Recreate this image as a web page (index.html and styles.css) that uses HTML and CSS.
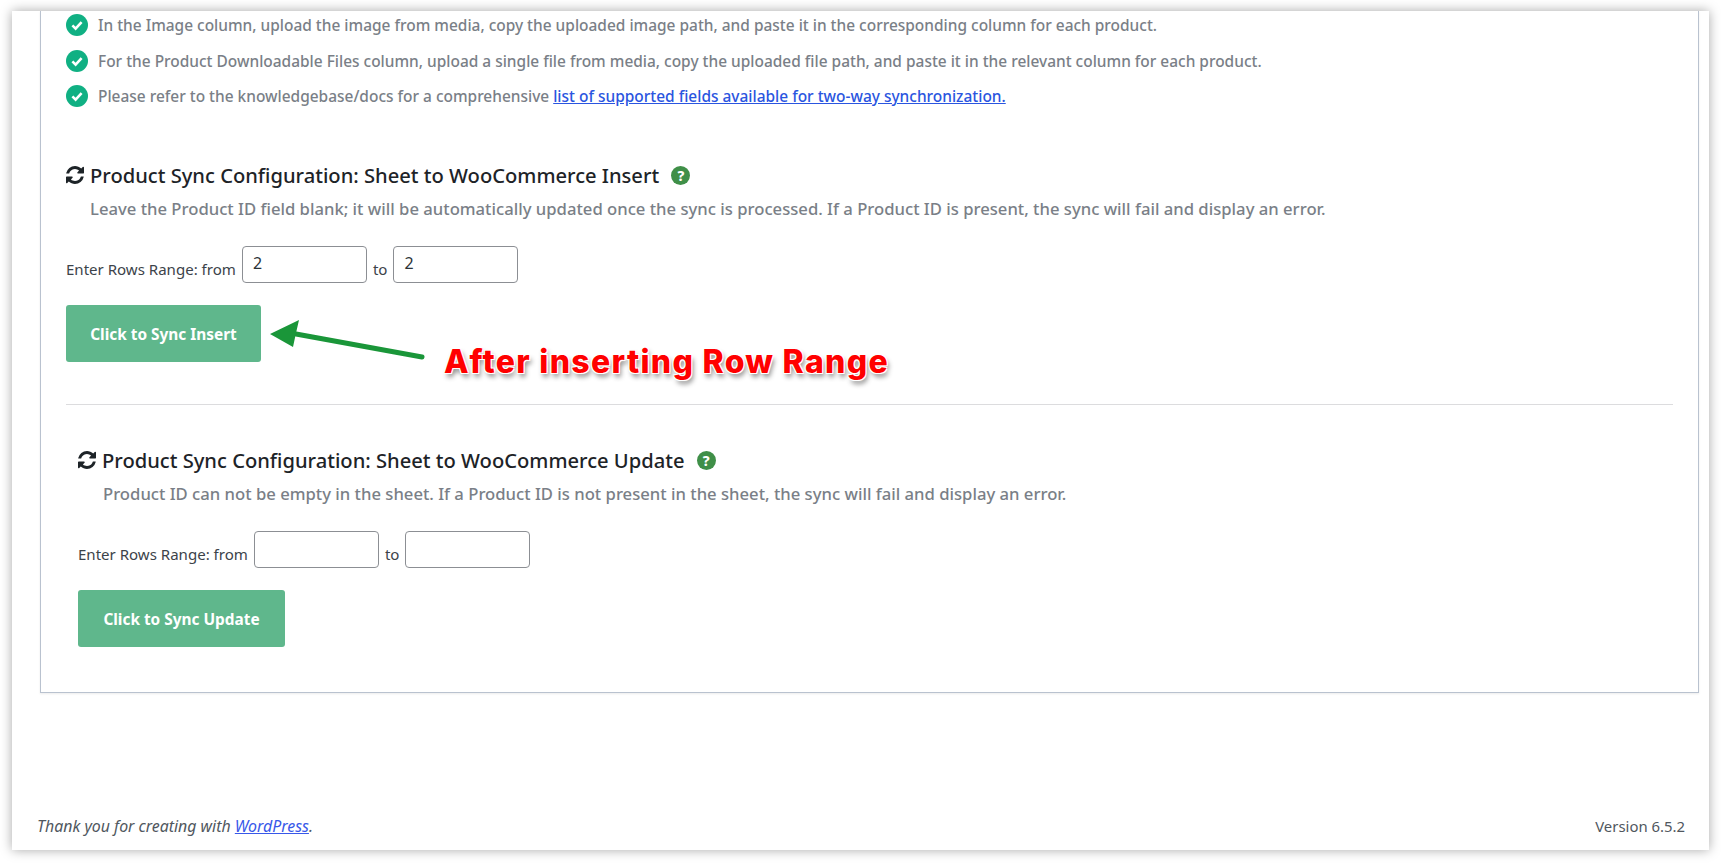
FILE: index.html
```html
<!DOCTYPE html>
<html lang="en">
<head>
    <meta charset="UTF-8">
    <title>Product Sync Configuration</title>
    <link rel="stylesheet" href="styles.css">
</head>
<body>

<svg class="defs" width="0" height="0">
    <symbol id="sync" viewBox="128 128 1536 1536">
        <path d="M1639 1056q0 5-1 7-64 268-268 434.5t-478 166.5q-146 0-282.5-55t-243.5-157l-129 129q-19 19-45 19t-45-19-19-45v-448q0-26 19-45t45-19h448q26 0 45 19t19 45-19 45l-137 137q71 66 161 102t187 36q134 0 250-65t186-179q11-17 53-117 8-23 30-23h192q13 0 22.5 9.5t9.5 22.5zm25-800v448q0 26-19 45t-45 19h-448q-26 0-45-19t-19-45 19-45l138-138q-148-137-349-137-134 0-250 65t-186 179q-11 17-53 117-8 23-30 23h-199q-13 0-22.5-9.5t-9.5-22.5v-7q65-268 270-434.5t480-166.5q146 0 284 55.5t245 156.5l130-129q19-19 45-19t45 19 19 45z"/>
    </symbol>
    <symbol id="check" viewBox="0 0 22 22">
        <circle cx="11" cy="11" r="11" fill="#10b083"/>
        <path d="M6.4 11.4l3.2 3.2 6-6.4" fill="none" stroke="#fff" stroke-width="2.6"/>
    </symbol>
</svg>

<div class="window">
    <div class="card">
        <ul class="steps">
            <li><svg class="check"><use href="#check"/></svg>In the Image column, upload the image from media, copy the uploaded image path, and paste it in the corresponding column for each product.</li>
            <li><svg class="check"><use href="#check"/></svg>For the Product Downloadable Files column, upload a single file from media, copy the uploaded file path, and paste it in the relevant column for each product.</li>
            <li><svg class="check"><use href="#check"/></svg><span>Please refer to the knowledgebase/docs for a comprehensive <a href="#">list of supported fields available for two-way synchronization.</a></span></li>
        </ul>

        <div class="sync first">
            <h2><svg class="sync-icon"><use href="#sync"/></svg>Product Sync Configuration: Sheet to WooCommerce Insert <span class="help">?</span></h2>
            <p class="desc">Leave the Product ID field blank; it will be automatically updated once the sync is processed. If a Product ID is present, the sync will fail and display an error.</p>
            <div class="range">
                <label>Enter Rows Range: from</label>
                <input type="text" value="2">
                <label>to</label>
                <input type="text" value="2">
            </div>
            <button class="btn">Click to Sync Insert</button>
        </div>

        <hr>

        <div class="sync second">
            <h2><svg class="sync-icon"><use href="#sync"/></svg>Product Sync Configuration: Sheet to WooCommerce Update <span class="help">?</span></h2>
            <p class="desc">Product ID can not be empty in the sheet. If a Product ID is not present in the sheet, the sync will fail and display an error.</p>
            <div class="range">
                <label>Enter Rows Range: from</label>
                <input type="text">
                <label>to</label>
                <input type="text">
            </div>
            <button class="btn">Click to Sync Update</button>
        </div>
    </div>

    <div class="footer">
        <span class="thanks">Thank you for creating with <a href="#">WordPress</a>.</span>
        <span>Version 6.5.2</span>
    </div>

    <svg class="arrow" width="170" height="50" viewBox="0 0 170 50">
        <path d="M156 39L30 16" stroke="#1a9639" stroke-width="5" stroke-linecap="round"/>
        <path d="M4 16L33 2 30 15 27 29z" fill="#1a9639"/>
    </svg>
    <div class="callout">After inserting Row Range</div>
</div>

</body>
</html>
```

FILE: styles.css
```css
html, body {
  margin: 0;
  padding: 0;
  background: #fff;
}
body {
  padding: 11px 12px 13px 12px;
  font-family: "Noto Sans", "Open Sans", sans-serif;
  overflow: hidden;
}
.defs {
  position: absolute;
}
.window {
  position: relative;
  height: 839px;
  width: 1697px;
  background: #fff;
  box-shadow: 0 0 11px rgba(0, 0, 0, 0.35);
  display: flex;
  flex-direction: column;
  overflow: visible;
}
.card {
  margin-left: 28px;
  width: 1659px;
  box-sizing: border-box;
  height: 682px;
  border: 1px solid #b9c2cf;
  border-top: 0;
  padding: 3px 25px 0 25px;
  box-shadow: 0 1px 2px rgba(0, 0, 0, 0.08);
}
.steps {
  list-style: none;
  margin: 0;
  padding: 0;
}
.steps li {
  display: flex;
  align-items: center;
  height: 22px;
  margin-bottom: 13.5px;
  font-size: 15.46px;
  font-weight: 500;
  color: #7a7f87;
  white-space: nowrap;
}
.check {
  width: 22px;
  height: 22px;
  margin-right: 10px;
  flex: none;
}
.steps a {
  color: #2a55e0;
}
.sync.first {
  margin-top: 54px;
}
.sync.second {
  margin-top: 41px;
  padding-left: 12px;
}
.first .btn {
  width: 195px;
}
.second .btn {
  width: 207px;
}
.second .desc {
  margin-left: 25px;
}
h2 {
  display: flex;
  align-items: center;
  margin: 0;
  height: 28px;
  font-size: 20.15px;
  font-weight: 500;
  color: #1d2327;
  white-space: pre;
}
.sync-icon {
  width: 18px;
  height: 18px;
  margin-right: 6px;
  fill: #1d2327;
}
.help {
  display: inline-block;
  width: 19px;
  height: 19px;
  margin-left: 7px;
  border-radius: 50%;
  background: #3f8f48;
  color: #fff;
  font-size: 14px;
  font-weight: 800;
  line-height: 19px;
  text-align: center;
}
.desc {
  margin: 8px 0 0 24px;
  height: 24px;
  line-height: 24px;
  font-size: 16.67px;
  font-weight: 500;
  color: #7a7f87;
  white-space: nowrap;
}
.range {
  display: flex;
  gap: 6px;
  margin-top: 25px;
  font-size: 15.05px;
  color: #3c434a;
}
.range label {
  margin-top: 13px;
}
.range input {
  box-sizing: border-box;
  width: 125px;
  height: 37px;
  border: 1px solid #8c8f94;
  border-radius: 4px;
  padding: 0 10px 3px;
  font-family: inherit;
  font-size: 16px;
  color: #2c3338;
  background: #fff;
}
.btn {
  display: block;
  margin-top: 22px;
  height: 57px;
  padding: 2px 0 0;
  border: 0;
  border-radius: 3px;
  background: #5fb78c;
  color: #fff;
  font-family: inherit;
  font-size: 15.4px;
  font-weight: 700;
}
hr {
  border: 0;
  border-top: 1px solid #dcdcde;
  margin: 42px 0 0 0;
}
.footer {
  display: flex;
  justify-content: space-between;
  align-items: baseline;
  margin-top: auto;
  padding: 0 24px 13px 25px;
  font-size: 14.9px;
  color: #50575e;
}
.thanks {
  font-style: italic;
  font-size: 15.9px;
}
.thanks a {
  color: #3858e9;
}
.arrow {
  position: absolute;
  left: 254px;
  top: 307px;
}
.callout {
  position: absolute;
  left: 432px;
  top: 331px;
  font-family: Inter, sans-serif;
  font-size: 32px;
  font-weight: 800;
  letter-spacing: 1.3px;
  color: #ff0000;
  white-space: nowrap;
  text-shadow: 1px 1px 0 #fff, -1px -1px 0 #fff, 1px -1px 0 #fff, -1px 1px 0 #fff, 2px 4px 5px rgba(0, 0, 0, 0.45);
}
```
